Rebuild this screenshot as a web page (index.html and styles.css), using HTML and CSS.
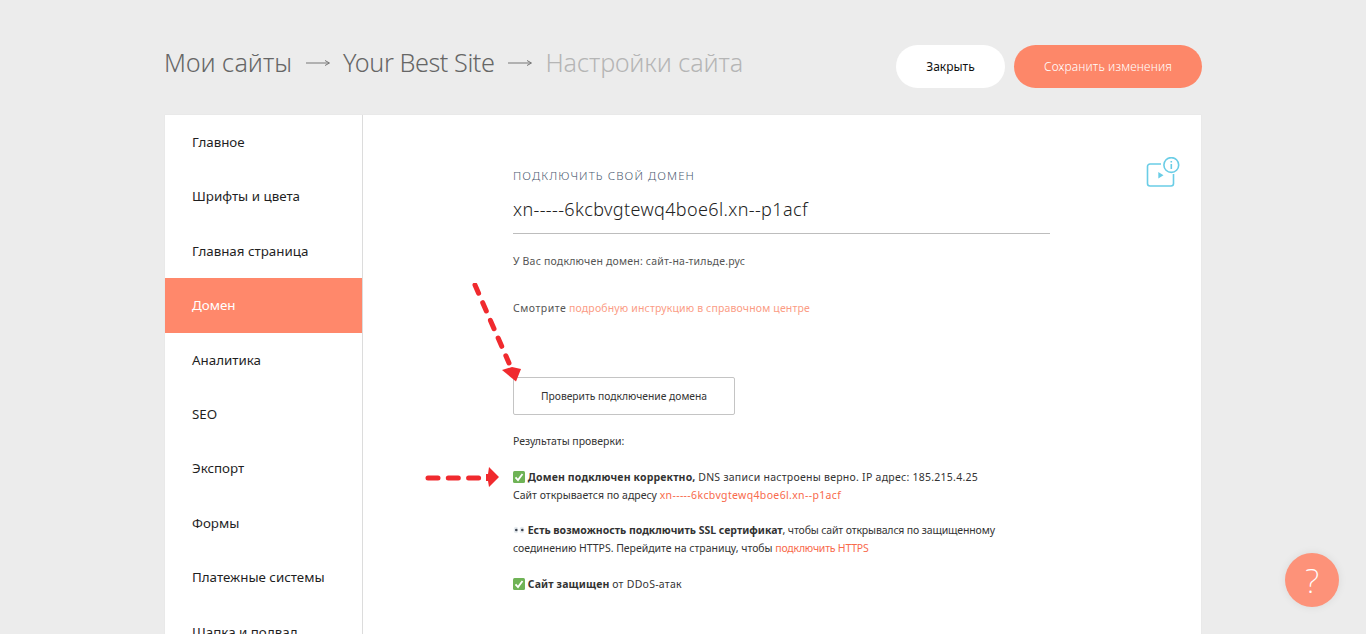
FILE: index.html
```html
<!DOCTYPE html>
<html lang="ru">
<head>
<meta charset="utf-8">
<title>Настройки сайта</title>
<link rel="stylesheet" href="styles.css">
</head>
<body>
<div class="page">
  <header class="top">
    <h1 class="crumbs">
      <span>Мои сайты</span>
      <svg class="crumb-arrow" viewBox="0 0 24 10"><path d="M0 5H23M19 2.500 23.500 5 19 7.500" fill="none" stroke="#777" stroke-width="1"/></svg>
      <span class="crumb-site">Your Best Site</span>
      <svg class="crumb-arrow" viewBox="0 0 24 10"><path d="M0 5H23M19 2.500 23.500 5 19 7.500" fill="none" stroke="#777" stroke-width="1"/></svg>
      <span class="crumb-current">Настройки сайта</span>
    </h1>
    <div class="actions">
      <button class="btn btn-close">Закрыть</button>
      <button class="btn btn-save">Сохранить изменения</button>
    </div>
  </header>
  <section class="panel">
    <nav class="side">
      <a class="side-item">Главное</a>
      <a class="side-item">Шрифты и цвета</a>
      <a class="side-item">Главная страница</a>
      <a class="side-item active">Домен</a>
      <a class="side-item">Аналитика</a>
      <a class="side-item">SEO</a>
      <a class="side-item">Экспорт</a>
      <a class="side-item">Формы</a>
      <a class="side-item">Платежные системы</a>
      <a class="side-item">Шапка и подвал</a>
    </nav>
    <main class="content">
      <svg class="video-info" viewBox="0 0 34 32" fill="none" stroke="#6acde6" stroke-width="1.600">
        <path d="M15 7H4a2.500 2.500 0 0 0-2.500 2.500V26.500A2.500 2.500 0 0 0 4 29H25a2.500 2.500 0 0 0 2.500-2.500V17"/>
        <circle cx="25.300" cy="8" r="7.400"/>
        <path d="M25.300 7V12M25.300 4V5.500"/>
        <path d="M12.300 15V21.500L17.500 18.200Z" fill="#6acde6" stroke="none"/>
      </svg>
      <div class="label">ПОДКЛЮЧИТЬ СВОЙ ДОМЕН</div>
      <div class="domain-input">xn-----6kcbvgtewq4boe6l.xn--p1acf</div>
      <p class="note connected">У Вас подключен домен: сайт-на-тильде.рус</p>
      <p class="note guide"><span class="wide-a">Смотрите</span> <a class="soft-link">подробную инструкцию в справочном центре</a></p>
      <button class="check">Проверить подключение домена</button>
      <p class="note results">Результаты проверки:</p>
      <p class="note result first">
        <svg class="tick" viewBox="0 0 12 12"><rect width="12" height="12" rx="1.500" fill="#6fb356"/><path d="M2.500 6.300 5 9 9.500 3" fill="none" stroke="#fff" stroke-width="1.800"/></svg>
        <b class="wide-d">Домен подключен корректно,</b> <span class="wide-b">DNS записи настроены верно. IP адрес: 185.215.4.25</span><br>
        Сайт открывается по адресу <a class="link wide-c">xn-----6kcbvgtewq4boe6l.xn--p1acf</a>
      </p>
      <p class="note result">
        <svg class="eyes" viewBox="0 0 12 12"><ellipse cx="3" cy="6" rx="2.300" ry="3.200" fill="#e6ebef"/><ellipse cx="9" cy="6" rx="2.300" ry="3.200" fill="#e6ebef"/><circle cx="3.300" cy="6" r="1.300" fill="#3d4450"/><circle cx="9.300" cy="6" r="1.300" fill="#3d4450"/></svg>
        <b>Есть возможность подключить SSL сертификат</b><span class="tight">, чтобы сайт открывался по защищенному</span><br>
        <span class="tight-line">соединению HTTPS. Перейдите на страницу, чтобы</span> <a class="link tight-link">подключить HTTPS</a>
      </p>
      <p class="note result last">
        <svg class="tick" viewBox="0 0 12 12"><rect width="12" height="12" rx="1.500" fill="#6fb356"/><path d="M2.500 6.300 5 9 9.500 3" fill="none" stroke="#fff" stroke-width="1.800"/></svg>
        <b class="wide-d">Сайт защищен</b> <span class="wide-e">от DDoS-атак</span>
      </p>
    </main>
  </section>
</div>
<svg class="annot annot-down" viewBox="0 0 60 110" fill="none">
  <path d="M3 2 37 80" stroke="#f02a2e" stroke-width="5" stroke-linecap="round" stroke-dasharray="9 10.300"/>
  <path d="M30 87 40 84 49 86 44 98.500Z" fill="#f02a2e"/>
</svg>
<svg class="annot annot-right" viewBox="0 0 76 20" fill="none">
  <path d="M3 11H56" stroke="#f02a2e" stroke-width="5" stroke-linecap="round" stroke-dasharray="10 10.300"/>
  <path d="M64 0 74 10 64 20 63 14H61V7H63Z" fill="#f02a2e"/>
</svg>
<button class="help">?</button>
</body>
</html>
```
FILE: styles.css
```css
* { box-sizing: border-box; }
html, body { margin: 0; height: 100%; overflow: hidden; }
body { background: #ececec; font-family: "Noto Sans", sans-serif; color: #222; }
.page { padding: 45px 165px 0 165px; }
.top { display: flex; align-items: center; justify-content: space-between; height: 43px; margin-bottom: 27px; }
.crumbs { margin: -10px 0 0 -1px; display: flex; align-items: center; font-weight: 300; font-size: 25.200px; color: #666; white-space: nowrap; }
.crumb-arrow { width: 24px; height: 10px; margin: 2px 13px 0 14px; flex: none; }
.crumb-site { letter-spacing: -.43px; }
.crumb-current { color: #b5b5b5; letter-spacing: -.13px; }
.actions { display: flex; gap: 9px; margin-right: -1px; }
.btn { height: 43px; border: 0; border-radius: 22px; font: inherit; font-size: 12px; }
.btn-close { width: 109px; background: #fff; color: #111; }
.btn-save { width: 188px; background: #fd8769; color: #fff; font-weight: 300; letter-spacing: .15px; }
.panel { display: flex; background: #fff; height: 560px; box-shadow: 0 0 1px #d8d8d8; }
.side { width: 198px; flex: none; border-right: 1px solid #dcdcdc; }
.side-item { display: flex; align-items: center; height: 54.400px; padding: 0 0 .3px 27px; font-size: 13.350px; color: #1f1f1f; }
.side-item.active { background: #ff886b; color: #fff; }
.content { position: relative; flex: 1; padding: 54px 151px 0 150px; }
.video-info { position: absolute; top: 42px; left: 783px; width: 34px; height: 32px; }
.label { font-size: 11.500px; letter-spacing: 1.100px; line-height: 14px; color: #4a5a70; font-weight: 300; }
.domain-input { height: 51px; padding-top: 14px; border-bottom: 1px solid #bdbdbd; font-size: 18px; line-height: 24px; color: #222; letter-spacing: .37px; font-weight: 300; }
.note { margin: 0; font-size: 10.500px; line-height: 18px; color: #333; }
.connected { margin-top: 18px; color: #555; letter-spacing: .2px; }
.guide { margin-top: 29px; color: #555; }
.soft-link { color: #fb9c85; letter-spacing: .16px; }
.link { color: #f86a4c; }
.wide-a { letter-spacing: .5px; }
.wide-b { letter-spacing: .26px; }
.wide-c { letter-spacing: .35px; }
.wide-d { letter-spacing: .15px; }
.wide-e { letter-spacing: .25px; }
.tight { letter-spacing: -.14px; }
.tight-line { letter-spacing: -.02px; }
.tight-link { letter-spacing: -.22px; }
.check { display: block; margin-top: 60px; width: 222px; height: 38px; background: #fff; border: 1px solid #c4c4c4; border-radius: 2px; font: inherit; font-size: 10.300px; color: #333; }
.results { margin-top: 17px; }
.result { margin-top: 17px; white-space: nowrap; }
.first { margin-top: 18px; }
.last { margin-top: 18px; }
.tick, .eyes { width: 12px; height: 12px; vertical-align: -2px; }
.annot { position: absolute; }
.annot-down { left: 472px; top: 283px; width: 60px; height: 110px; }
.annot-right { left: 425px; top: 467px; width: 76px; height: 20px; }
.help { position: absolute; left: 1285px; top: 553px; width: 54px; height: 54px; border: 0; border-radius: 50%; background: #fd9279; color: #fff; font-size: 34px; font-weight: 200; font-family: "Noto Sans", sans-serif; box-shadow: 0 0 8px rgba(0,0,0,.08); }
```
